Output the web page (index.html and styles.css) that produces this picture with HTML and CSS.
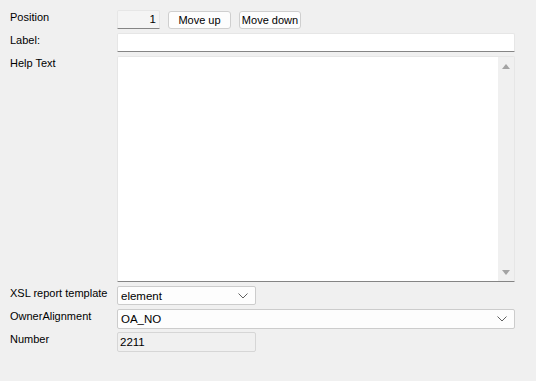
FILE: index.html
```html
<!DOCTYPE html>
<html>
<head>
<meta charset="utf-8">
<link rel="stylesheet" href="styles.css">
</head>
<body>
<div class="form">
  <div class="lbl">Position</div>
  <div class="fld pos-row">
    <div class="pos-box">1</div>
    <button class="btn btn-up">Move up</button>
    <button class="btn btn-down">Move down</button>
  </div>

  <div class="lbl">Label:</div>
  <div class="fld"><div class="textbox"></div></div>

  <div class="lbl">Help Text</div>
  <div class="fld">
    <div class="memo">
      <div class="memo-body"></div>
      <div class="scroll">
        <span class="tri tri-up"></span>
        <span class="tri tri-down"></span>
      </div>
    </div>
  </div>

  <div class="lbl">XSL report template</div>
  <div class="fld">
    <div class="select select-short">
      <span class="sel-text">element</span>
      <svg class="chev" width="10" height="6" viewBox="0 0 10 6"><path d="M0.5 0.5 L5 5 L9.5 0.5" fill="none" stroke="#606060" stroke-width="1"/></svg>
    </div>
  </div>

  <div class="lbl">OwnerAlignment</div>
  <div class="fld">
    <div class="select">
      <span class="sel-text">OA_NO</span>
      <svg class="chev" width="10" height="6" viewBox="0 0 10 6"><path d="M0.5 0.5 L5 5 L9.5 0.5" fill="none" stroke="#606060" stroke-width="1"/></svg>
    </div>
  </div>

  <div class="lbl">Number</div>
  <div class="fld"><div class="readonly">2211</div></div>
</div>
</body>
</html>
```

FILE: styles.css
```css
html, body {
  margin: 0;
  padding: 0;
  background: #f0f0f0;
}
body {
  font-family: "Liberation Sans", Arial, sans-serif;
  font-size: 11px;
  color: #000;
  padding: 10px 0 0 10px;
}
.form {
  display: grid;
  grid-template-columns: 107px 398px;
  grid-template-rows: 20px 20px 227px 20px 20px 20px;
  row-gap: 3px;
}
.lbl {
  line-height: 15px;
  align-self: start;
}
.fld {
  display: flex;
  align-items: stretch;
}
.pos-row {
  align-items: flex-start;
  gap: 8px;
}
.pos-box {
  box-sizing: border-box;
  width: 43px;
  height: 19px;
  background: #f4f4f4;
  border: 1px solid #e6e6e6;
  border-bottom: 1px solid #858585;
  border-radius: 2px 2px 0 0;
  text-align: right;
  padding-right: 3px;
  line-height: 17px;
  font-size: 11.5px;
}
.btn {
  box-sizing: border-box;
  margin: 1px 0 0 0;
  height: 18px;
  padding: 0;
  background: #fdfdfd;
  border: 1px solid #cfcfcf;
  border-radius: 3px;
  font-family: "Liberation Sans", Arial, sans-serif;
  font-size: 11px;
  color: #000;
  line-height: 16px;
}
.btn-up { width: 63px; }
.btn-down { width: 62px; }
.textbox {
  box-sizing: border-box;
  width: 398px;
  height: 19px;
  background: #fff;
  border: 1px solid #e6e6e6;
  border-bottom: 1px solid #858585;
  border-radius: 2px 2px 0 0;
}
.memo {
  box-sizing: border-box;
  width: 398px;
  height: 226px;
  display: flex;
  background: #fff;
  border: 1px solid #e6e6e6;
  border-bottom: 1px solid #858585;
  border-radius: 2px 2px 0 0;
}
.memo-body {
  flex: 1;
}
.scroll {
  width: 16px;
  background: #f0f0f0;
  display: flex;
  flex-direction: column;
  justify-content: space-between;
  align-items: center;
  padding: 7px 0 6px;
}
.tri {
  width: 0;
  height: 0;
  border-left: 4px solid transparent;
  border-right: 4px solid transparent;
}
.tri-up { border-bottom: 5px solid #a3a3a3; }
.tri-down { border-top: 5px solid #a3a3a3; }
.select {
  box-sizing: border-box;
  width: 398px;
  height: 20px;
  background: #fdfdfd;
  border: 1px solid #cccccc;
  border-radius: 2px;
  display: flex;
  align-items: center;
  justify-content: space-between;
  padding: 0 7px 0 3px;
  font-size: 11.5px;
}
.select-short {
  width: 139px;
  height: 19px;
}
.chev {
  display: block;
}
.readonly {
  box-sizing: border-box;
  width: 139px;
  height: 20px;
  background: #f0f0f0;
  border: 1px solid #d6d6d6;
  border-radius: 2px;
  padding-left: 2px;
  line-height: 18px;
  font-size: 11.5px;
}
```
